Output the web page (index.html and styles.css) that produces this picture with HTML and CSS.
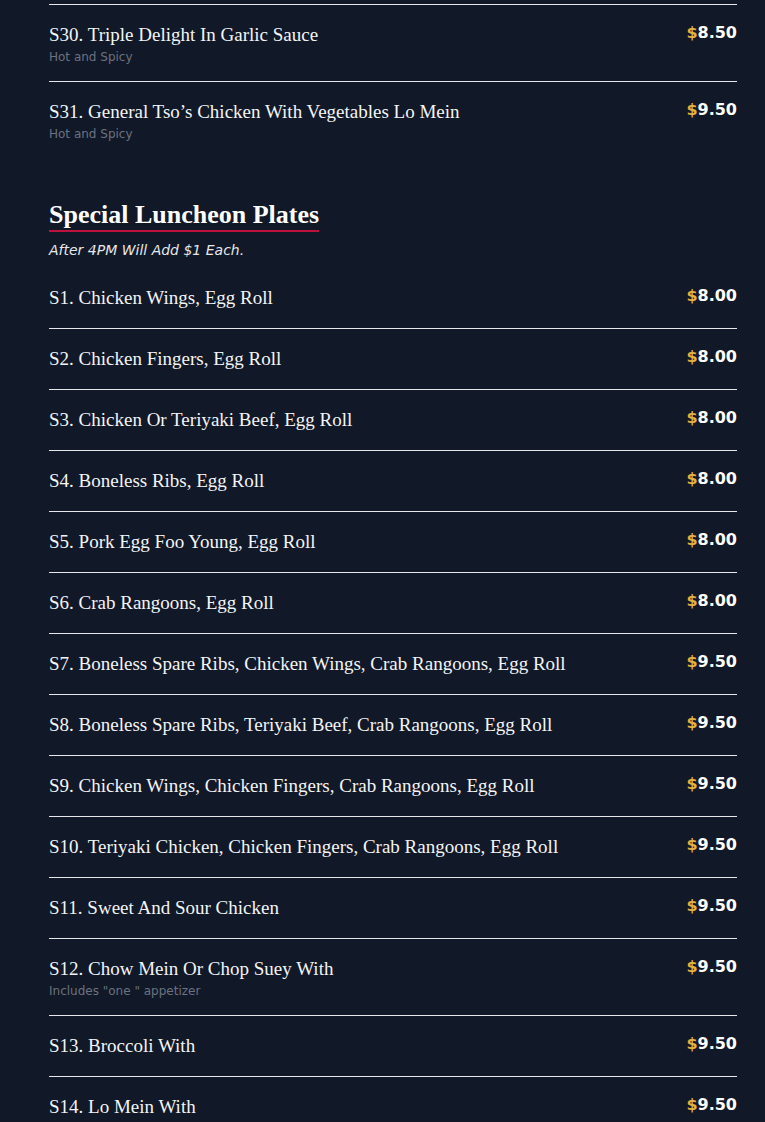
FILE: index.html
```html
<!DOCTYPE html>
<html lang="en">
<head>
<meta charset="utf-8">
<title>Menu</title>
<link rel="stylesheet" href="styles.css">
</head>
<body>
<main class="menu">
  <section class="section section-top">
    <ul class="items">
      <li class="item"><div class="info"><div class="name">S30. Triple Delight In Garlic Sauce</div><div class="desc">Hot and Spicy</div></div><div class="price"><span class="cur">$</span>8.50</div></li>
      <li class="item"><div class="info"><div class="name">S31. General Tso’s Chicken With Vegetables Lo Mein</div><div class="desc">Hot and Spicy</div></div><div class="price"><span class="cur">$</span>9.50</div></li>
    </ul>
  </section>
  <section class="section">
    <h2 class="heading">Special Luncheon Plates</h2>
    <p class="note">After 4PM Will Add $1 Each.</p>
    <ul class="items">
      <li class="item"><div class="info"><div class="name">S1. Chicken Wings, Egg Roll</div></div><div class="price"><span class="cur">$</span>8.00</div></li>
      <li class="item"><div class="info"><div class="name">S2. Chicken Fingers, Egg Roll</div></div><div class="price"><span class="cur">$</span>8.00</div></li>
      <li class="item"><div class="info"><div class="name">S3. Chicken Or Teriyaki Beef, Egg Roll</div></div><div class="price"><span class="cur">$</span>8.00</div></li>
      <li class="item"><div class="info"><div class="name">S4. Boneless Ribs, Egg Roll</div></div><div class="price"><span class="cur">$</span>8.00</div></li>
      <li class="item"><div class="info"><div class="name">S5. Pork Egg Foo Young, Egg Roll</div></div><div class="price"><span class="cur">$</span>8.00</div></li>
      <li class="item"><div class="info"><div class="name">S6. Crab Rangoons, Egg Roll</div></div><div class="price"><span class="cur">$</span>8.00</div></li>
      <li class="item"><div class="info"><div class="name">S7. Boneless Spare Ribs, Chicken Wings, Crab Rangoons, Egg Roll</div></div><div class="price"><span class="cur">$</span>9.50</div></li>
      <li class="item"><div class="info"><div class="name">S8. Boneless Spare Ribs, Teriyaki Beef, Crab Rangoons, Egg Roll</div></div><div class="price"><span class="cur">$</span>9.50</div></li>
      <li class="item"><div class="info"><div class="name">S9. Chicken Wings, Chicken Fingers, Crab Rangoons, Egg Roll</div></div><div class="price"><span class="cur">$</span>9.50</div></li>
      <li class="item"><div class="info"><div class="name">S10. Teriyaki Chicken, Chicken Fingers, Crab Rangoons, Egg Roll</div></div><div class="price"><span class="cur">$</span>9.50</div></li>
      <li class="item"><div class="info"><div class="name">S11. Sweet And Sour Chicken</div></div><div class="price"><span class="cur">$</span>9.50</div></li>
      <li class="item"><div class="info"><div class="name">S12. Chow Mein Or Chop Suey With</div><div class="desc">Includes "one " appetizer</div></div><div class="price"><span class="cur">$</span>9.50</div></li>
      <li class="item"><div class="info"><div class="name">S13. Broccoli With</div></div><div class="price"><span class="cur">$</span>9.50</div></li>
      <li class="item"><div class="info"><div class="name">S14. Lo Mein With</div></div><div class="price"><span class="cur">$</span>9.50</div></li>
    </ul>
  </section>
</main>
</body>
</html>
```

FILE: styles.css
```css
html, body {
  margin: 0;
  padding: 0;
  background: #111827;
}
body {
  color: #f3f4f6;
  font-family: "DejaVu Sans", sans-serif;
  overflow: hidden;
}
.menu {
  padding: 4px 28px 0 49px;
}
.items {
  list-style: none;
  margin: 0;
  padding: 0;
}
.section-top .items {
  border-top: 1px solid #e5e7eb;
}
.item {
  display: flex;
  justify-content: space-between;
  align-items: flex-start;
  gap: 16px;
  padding: 16px 0;
  border-bottom: 1px solid #e5e7eb;
}
.item:last-child {
  border-bottom: none;
}
.name {
  font-family: "Liberation Serif", serif;
  font-size: 19px;
  line-height: 28px;
  color: #f3f4f6;
}
.desc {
  font-size: 12px;
  line-height: 16px;
  color: #6b7280;
}
.price {
  font-weight: bold;
  font-size: 16px;
  line-height: 24px;
  color: #ffffff;
  white-space: nowrap;
}
.cur {
  color: #e3b23c;
}
.section + .section {
  margin-top: 42px;
}
.heading {
  display: inline-block;
  margin: 0;
  font-family: "Liberation Serif", serif;
  font-weight: bold;
  font-size: 26px;
  line-height: 30px;
  color: #ffffff;
  border-bottom: 2px solid #be123c;
}
.note {
  margin: 8px 0 8px;
  font-style: italic;
  font-size: 14px;
  line-height: 20px;
  color: #e5e7eb;
}
```
